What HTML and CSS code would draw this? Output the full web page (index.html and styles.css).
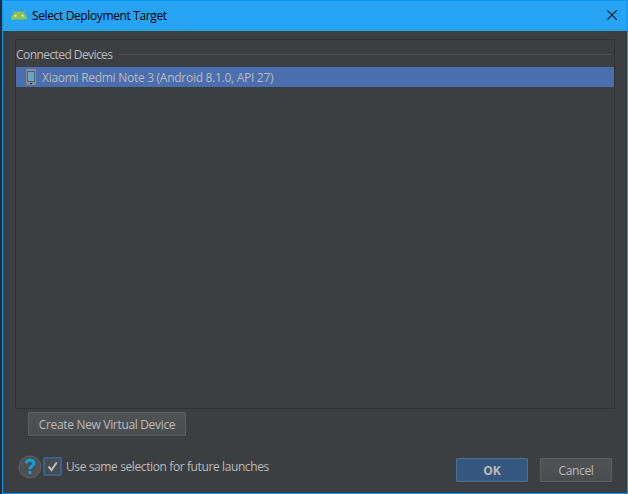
FILE: index.html
```html
<!DOCTYPE html>
<html lang="en">
<head>
<meta charset="utf-8">
<title>Select Deployment Target</title>
<link rel="stylesheet" href="styles.css">
</head>
<body>
<div class="dialog">
  <header class="titlebar">
    <svg class="android" width="16" height="10" viewBox="0 0 16 10">
      <path d="M1.500 .3 4 3.200M14.500 .3 12 3.200" stroke="#8fbe4b" stroke-width="1.100"/>
      <path d="M0 9.500C.5 4 3.500 1.400 8 1.400S15.500 4 16 9.500Z" fill="#8fc252"/>
      <circle cx="4.500" cy="5.700" r=".9" fill="#fff"/><circle cx="11.500" cy="5.700" r=".9" fill="#fff"/>
    </svg>
    <h1 class="title">Select Deployment Target</h1>
    <svg class="close" width="10" height="10" viewBox="0 0 10 10"><path d="M.3.3 9.700 9.700M9.700.3.3 9.700" stroke="#07121b" stroke-width="1.100"/></svg>
  </header>
  <main class="content">
    <section class="panel">
      <div class="group"><span class="group-label">Connected Devices</span><span class="rule"></span></div>
      <div class="device">
        <svg class="phone" width="10" height="16" viewBox="0 0 10 16">
          <rect width="10" height="16" rx=".7" fill="#8b8b8b"/>
          <rect x="1" y="2" width="8" height="11" fill="#4c6673"/>
          <rect x="2" y="3" width="6" height="9" fill="#69a7c9"/>
          <rect x="4" y="14" width="2" height="1" fill="#111"/>
        </svg>
        <span class="device-label">Xiaomi Redmi Note 3 (Android 8.1.0, API 27)</span>
      </div>
    </section>
    <button class="btn create"><span>Create New Virtual Device</span></button>
    <footer class="footer">
      <svg class="help" width="24" height="24" viewBox="0 0 24 24">
        <circle cx="12" cy="12" r="11" fill="#4c5052" stroke="#5e6162"/>
        <path d="M8.200 8.200C8.500 5.900 10 5.200 12 5.200c2.400 0 3.800 1.200 3.800 3 0 2.900-3.800 2.700-3.800 6.100" fill="none" stroke="#12a0e6" stroke-width="2.800"/>
        <rect x="10.500" y="16" width="3" height="3" rx=".7" fill="#12a0e6"/>
      </svg>
      <span class="check"><svg width="13" height="13" viewBox="0 0 13 13"><path d="M2.500 6.500 5.500 10 10.800 2.200" fill="none" stroke="#b9bcbe" stroke-width="2"/></svg></span>
      <span class="check-label">Use same selection for future launches</span>
      <button class="btn ok"><span>OK</span></button>
      <button class="btn cancel"><span>Cancel</span></button>
    </footer>
  </main>
</div>
</body>
</html>
```
FILE: styles.css
```css
* { box-sizing: border-box; }
body {
  margin: 0;
  height: 494px;
  padding-left: 2px;
  overflow: hidden;
  background: #2b2b2b;
  color: #bbbbbb;
  font: 12px/16px "Open Sans", "Noto Sans", sans-serif;
  white-space: nowrap;
}
svg { display: block; flex: none; }
.dialog {
  display: flex;
  flex-direction: column;
  height: 494px;
  border: 1px solid #0c96f5;
  background: #3c3f41;
}
.titlebar {
  display: flex;
  align-items: center;
  flex: none;
  height: 30px;
  padding: 0 10px 0 8px;
  background: #26a3f3;
  color: #000;
}
.android { margin-top: -2px; }
.title { margin: 0 auto 0 5px; font-size: 12px; font-weight: 400; letter-spacing: -0.37px; }
.close { margin-bottom: 2px; }
.content { padding: 8px 12px 0; }
.panel { height: 370px; border: 1px solid #323232; }
.group { display: flex; align-items: center; height: 27px; padding: 2px 3px 0 0; gap: 7px; }
.group-label { letter-spacing: -0.57px; padding-top: 1px; }
.rule { flex: 1; height: 1px; background: #515151; }
.device {
  display: flex;
  align-items: center;
  height: 20px;
  padding-left: 10px;
  gap: 6px;
  background: #4b6eaf;
}
.device-label { padding-top: 2px; letter-spacing: -0.28px; }
.btn {
  display: flex;
  align-items: center;
  justify-content: center;
  height: 24px;
  padding: 1px 0 0;
  border: 1px solid #5e6060;
  border-radius: 1px;
  background: linear-gradient(#4f5355, #4a4d4f);
  box-shadow: 0 1px #363839;
  color: #bbbbbb;
  font: inherit;
  letter-spacing: -0.33px;
}
.create { width: 158px; margin: 3px 0 0 13px; padding-top: 2px; }
.footer { display: flex; align-items: center; height: 28px; margin-top: 18px; padding: 0 3px; }
.help { margin-top: -3px; }
.check {
  display: grid;
  place-items: center;
  width: 19px;
  height: 19px;
  margin: -3px 4px 0 1px;
  border: 2px solid #3a618f;
  border-radius: 2px;
  background: #484c4f;
}
.check-label { margin: -2px auto 0 0; letter-spacing: -0.39px; }
.ok {
  width: 72px;
  margin: 4px 12px 0 0;
  border-color: #4c708c;
  background: #365880;
  font-weight: 700;
  letter-spacing: 0;
}
.cancel { width: 72px; margin-top: 4px; }
```
